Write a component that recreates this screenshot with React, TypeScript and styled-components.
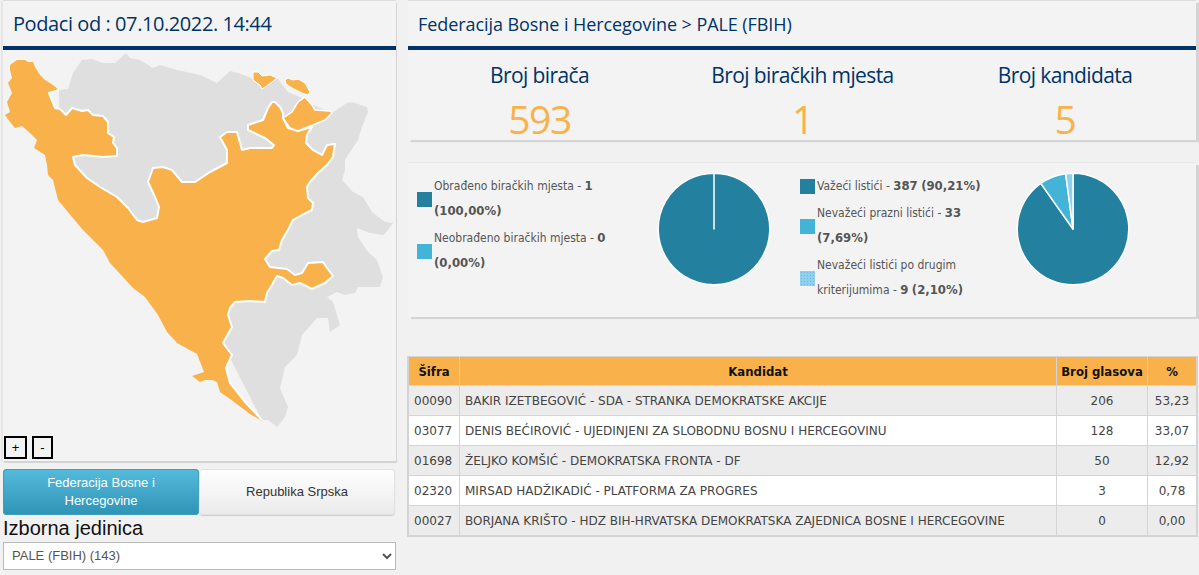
import React from "react";
import styled, { createGlobalStyle } from "styled-components";

const ORANGE = "#f9b24b";
const NAVY = "#003366";
const BLUE = "#23809e";
const SKY = "#43b3d8";
const PALE = "#8fd0ee";

const legendA = [
  { color: "dark", text: ["Obrađeno biračkih mjesta - "], bold: ["1", "(100,00%)"] },
  { color: "sky", text: ["Neobrađeno biračkih mjesta - "], bold: ["0", "(0,00%)"] },
];
const legendB = [
  { color: "dark", text: ["Važeći listići - "], bold: ["387", "(90,21%)"] },
  { color: "sky", text: ["Nevažeći prazni listići - "], bold: ["33", "(7,69%)"] },
  { color: "pale", text: ["Nevažeći listići po drugim ", "kriterijumima - "], bold: ["9", "(2,10%)"] },
];
const rows = [
  ["00090", "BAKIR IZETBEGOVIĆ - SDA - STRANKA DEMOKRATSKE AKCIJE", "206", "53,23"],
  ["03077", "DENIS BEĆIROVIĆ - UJEDINJENI ZA SLOBODNU BOSNU I HERCEGOVINU", "128", "33,07"],
  ["01698", "ŽELJKO KOMŠIĆ - DEMOKRATSKA FRONTA - DF", "50", "12,92"],
  ["02320", "MIRSAD HADŽIKADIĆ - PLATFORMA ZA PROGRES", "3", "0,78"],
  ["00027", "BORJANA KRIŠTO - HDZ BIH-HRVATSKA DEMOKRATSKA ZAJEDNICA BOSNE I HERCEGOVINE", "0", "0,00"],
];

// map traced in page coordinates, the svg sits at (3,50)
const country =
  "59,90 68,89 73,73 82,60 92,59 103,63 115,63 126,53 130,58 140,60 153,68 160,65 170,68 177,70 200,75 217,83 230,71 238,73 252,78 262,89 277,78 288,92 302,98 313,105 332,113 347,103 352,102 367,107 368,112 362,127 358,140 348,155 345,160 345,170 342,180 353,192 363,197 372,212 385,222 393,223 388,230 383,235 370,233 357,228 358,237 368,252 377,260 383,277 380,287 358,287 355,293 345,295 337,292 327,297 333,302 340,325 330,332 328,318 317,318 302,335 297,355 285,367 280,388 288,407 285,417 277,427 268,420 262,420 200,300 60,150";
const border =
  "59,90 49,93 55,108 60,109 66,115 72,108 82,111 88,110 93,115 103,116 108,122 108,133 114,137 113,143 117,148 117,156 103,157 83,155 73,157 75,165 87,178 100,187 117,197 128,208 137,220 143,222 157,218 159,207 155,197 148,182 153,168 163,167 172,170 182,182 195,182 210,172 227,163 227,150 220,137 227,132 237,132 242,150 250,148 272,148 274,145 265,138 248,130 248,125 263,120 268,108 272,102 275,102 280,107 283,113 283,118 288,128 298,131 312,127 307,135 306,143 313,150 322,155 327,145 335,144 333,157 327,165 318,173 310,182 307,187 308,198 313,203 312,210 302,215 293,220 288,230 282,240 279,250 272,251 265,259 270,267 287,269 295,275 302,273 308,263 323,262 327,268 333,276 325,283 312,289 300,283 292,285 283,278 277,276 272,285 267,293 265,302 250,301 235,302 230,308 228,315 232,327 223,343 232,355 226,368 230,383 245,402 262,420";
const coast =
  "262,421 250,414 242,408 230,399 220,392 217,382 212,380 205,380 200,382 192,376 204,372 197,354 177,343 167,332 158,315 145,297 133,288 110,263 103,250 83,230 72,217 58,200 53,180 48,175 47,165 45,155 34,148 37,140 30,133 22,126 15,128 10,122 5,115 10,112 7,102 12,93 8,83 12,78 10,70 10,65 17,60 25,60 28,62 33,62 35,67 40,75 45,80 53,85";
const brcko =
  "305,97 312,105 315,110 330,111 332,113 325,120 313,125 305,128 298,131 290,128 283,118 292,112 298,102";
const posavina = "253,72 258,72 262,76 270,75 277,78 268,85 262,89 260,85 253,80";
const orasje = "285,80 288,78 293,80 298,79 305,83 310,92 308,95 302,93 292,88 286,84";

function slice(cx: number, cy: number, r: number, from: number, to: number) {
  const a = ((from / 100) * 360 - 90) * (Math.PI / 180);
  const b = ((to / 100) * 360 - 90) * (Math.PI / 180);
  const large = to - from > 50 ? 1 : 0;
  return `M${cx} ${cy}L${cx + r * Math.cos(a)} ${cy + r * Math.sin(a)}A${r} ${r} 0 ${large} 1 ${cx + r * Math.cos(b)} ${cy + r * Math.sin(b)}Z`;
}

function Pie({ parts }: { parts: { value: number; fill: string }[] }) {
  let start = 0;
  return (
    <PieSvg viewBox="0 0 114 114">
      {parts.map((p) => {
        const d = slice(57, 57, 55.8, start, start + p.value);
        start += p.value;
        return <path key={p.fill} d={d} fill={p.fill} stroke="#fff" strokeWidth="1.5" strokeLinejoin="round" />;
      })}
    </PieSvg>
  );
}

function Legend({ items, width }: { items: typeof legendB; width: number }) {
  return (
    <LegendList $width={width}>
      {items.map((i) => (
        <LegendItem key={i.text[0]}>
          <Swatch $kind={i.color} />
          <span>
            {i.text.map((t) => (
              <span key={t}>{t}</span>
            ))}
            <LegendBold>{i.bold[0]}</LegendBold> <LegendBold>{i.bold[1]}</LegendBold>
          </span>
        </LegendItem>
      ))}
    </LegendList>
  );
}

export default function App() {
  return (
    <Page>
      <GlobalStyle />
      <LeftColumn>
        <MapPanel>
          <PanelHeader>
            <DateTitle>Podaci od : 07.10.2022. 14:44</DateTitle>
          </PanelHeader>
          <MapSvg viewBox="3 50 393 411">
            <polygon points={country} fill="#dfdfdf" />
            <polygon points={`${border} ${coast}`} fill={ORANGE} />
            <polyline points={border} fill="none" stroke="#fff" strokeWidth="2" strokeLinejoin="round" />
            <polygon points={brcko} fill={ORANGE} stroke="#fff" strokeWidth="1.5" />
            <polygon points={posavina} fill={ORANGE} stroke="#fff" strokeWidth="1" />
            <polygon points={orasje} fill={ORANGE} stroke="#fff" strokeWidth="1" />
          </MapSvg>
          <ZoomBar>
            <ZoomButton>+</ZoomButton>
            <ZoomButton $narrow>-</ZoomButton>
          </ZoomBar>
        </MapPanel>
        <Tabs>
          <Tab $active>Federacija Bosne i Hercegovine</Tab>
          <Tab>Republika Srpska</Tab>
        </Tabs>
        <SelectLabel>Izborna jedinica</SelectLabel>
        <UnitSelect defaultValue="143">
          <option value="143">PALE (FBIH) (143)</option>
        </UnitSelect>
      </LeftColumn>
      <RightColumn>
        <TopPanel>
          <PanelHeader>
            <Breadcrumb>Federacija Bosne i Hercegovine &gt; PALE (FBIH)</Breadcrumb>
          </PanelHeader>
          <Stats>
            <Stat>
              <StatLabel>Broj birača</StatLabel>
              <StatValue>593</StatValue>
            </Stat>
            <Stat>
              <StatLabel>Broj biračkih mjesta</StatLabel>
              <StatValue>1</StatValue>
            </Stat>
            <Stat>
              <StatLabel>Broj kandidata</StatLabel>
              <StatValue>5</StatValue>
            </Stat>
          </Stats>
        </TopPanel>
        <ChartsPanel>
          <ChartBlock>
            <Legend items={legendA} width={232} />
            <Pie parts={[{ value: 99.999, fill: BLUE }]} />
          </ChartBlock>
          <ChartBlock $second>
            <Legend items={legendB} width={208} />
            <Pie
              parts={[
                { value: 90.21, fill: BLUE },
                { value: 7.69, fill: SKY },
                { value: 2.1, fill: PALE },
              ]}
            />
          </ChartBlock>
        </ChartsPanel>
        <ResultsTable>
          <thead>
            <tr>
              <HeadCell $w={51}>Šifra</HeadCell>
              <HeadCell>Kandidat</HeadCell>
              <HeadCell $w={91}>Broj glasova</HeadCell>
              <HeadCell $w={49}>%</HeadCell>
            </tr>
          </thead>
          <tbody>
            {rows.map((r) => (
              <Row key={r[0]}>
                <Cell>{r[0]}</Cell>
                <Cell>{r[1]}</Cell>
                <Cell $center>{r[2]}</Cell>
                <Cell $center>{r[3]}</Cell>
              </Row>
            ))}
          </tbody>
        </ResultsTable>
      </RightColumn>
    </Page>
  );
}

//*Styles

const GlobalStyle = createGlobalStyle`
  html, body {
    margin: 0;
    background: #f1f1f1;
    overflow: hidden;
  }
`;

const Page = styled.div`
  display: grid;
  grid-template-columns: 394px 789px;
  gap: 11px;
  width: 1199px;
  height: 575px;
  padding-left: 3px;
  box-sizing: border-box;
`;

const LeftColumn = styled.div`
  display: flex;
  flex-direction: column;
`;

const RightColumn = styled.div`
  display: flex;
  flex-direction: column;
`;

const MapPanel = styled.div`
  position: relative;
  width: 393px;
  height: 460px;
  margin-top: 1px;
  background: #f3f3f3;
  box-shadow: 0 -1px 0 #ddd, 1px 2px 0 #d4d4d4, -2px 0 0 #e6e6e6;
`;

const PanelHeader = styled.div`
  display: flex;
  align-items: center;
  height: 45px;
  border-bottom: 4px solid ${NAVY};
`;

const DateTitle = styled.h1`
  margin: 0 0 0 10px;
  font: 400 20px "Open Sans", sans-serif;
  letter-spacing: -0.42px;
  color: ${NAVY};
`;

const MapSvg = styled.svg`
  display: block;
  width: 393px;
  height: 411px;
`;

const ZoomBar = styled.div`
  position: absolute;
  left: 1px;
  bottom: 2px;
  display: flex;
  gap: 5px;
`;

const ZoomButton = styled.button<{ $narrow?: boolean }>`
  width: ${(p) => (p.$narrow ? 21 : 23)}px;
  height: 23px;
  padding: 0;
  background: #f3f3f3;
  border: 2px solid #000;
  color: #000;
  font: 13px "Liberation Sans", sans-serif;
`;

const Tabs = styled.div`
  display: flex;
  margin-top: 8px;
  width: 392px;
  height: 46px;
`;

const Tab = styled.div<{ $active?: boolean }>`
  flex: 1;
  display: flex;
  align-items: center;
  justify-content: center;
  text-align: center;
  padding: 0 30px;
  font: 13px/18px "Liberation Sans", sans-serif;
  border-radius: 4px;
  color: ${(p) => (p.$active ? "#fff" : "#333")};
  background: ${(p) =>
    p.$active ? "linear-gradient(#55bbdd, #2f93b5)" : "linear-gradient(#ffffff, #eaeaea)"};
  box-shadow: ${(p) => (p.$active ? "inset 0 0 0 1px #3c9dbd" : "inset 0 0 0 1px #e2e2e2, 0 1px 1px #ccc")};
`;

const SelectLabel = styled.label`
  font: 20px/26px "Liberation Sans", sans-serif;
  color: #111;
`;

const UnitSelect = styled.select`
  width: 393px;
  height: 28px;
  margin-top: 1px;
  padding: 0 4px 2px;
  background: #fff;
  border: 1px solid #bbb;
  border-radius: 0;
  font: 13px "Liberation Sans", sans-serif;
  color: #555;
`;

const TopPanel = styled.div`
  width: 788px;
  height: 139px;
  margin-top: 1px;
  background: #f3f3f3;
  box-shadow: 0 -1px 0 #ddd, 3px 2px 1px #d4d4d4;
`;

const Breadcrumb = styled.h2`
  margin: 0 0 0 10px;
  font: 400 18px "Open Sans", sans-serif;
  letter-spacing: -0.07px;
  color: ${NAVY};
`;

const Stats = styled.div`
  display: grid;
  grid-template-columns: 263px 263px 262px;
`;

const Stat = styled.div`
  display: flex;
  flex-direction: column;
  align-items: center;
  padding-top: 10px;
`;

const StatLabel = styled.div`
  font: 400 21px/30px "Open Sans", sans-serif;
  letter-spacing: -0.6px;
  color: ${NAVY};
`;

const StatValue = styled.div`
  margin-top: 7px;
  font: 400 39px/44px "Open Sans", sans-serif;
  letter-spacing: -1.4px;
  color: ${ORANGE};
`;

const ChartsPanel = styled.div`
  display: flex;
  width: 788px;
  height: 154px;
  margin-top: 23px;
  background: #f3f3f3;
  box-shadow: 0 -1px 0 #e8e8e8, 3px 2px 0 #d4d4d4;
`;

const ChartBlock = styled.div<{ $second?: boolean }>`
  display: flex;
  align-items: flex-start;
  width: ${(p) => (p.$second ? 397 : 391)}px;
  padding: 11px 0 0 ${(p) => (p.$second ? 1 : 9)}px;
  box-sizing: border-box;
`;

const LegendList = styled.div<{ $width: number }>`
  display: flex;
  flex-direction: column;
  gap: 2px;
  width: ${(p) => p.$width}px;
  flex: none;
`;

const LegendItem = styled.div`
  display: flex;
  align-items: center;
  gap: 2px;
  font: 12px/25px "DejaVu Sans Condensed", "DejaVu Sans", sans-serif;
  color: #555;
  padding-right: 20px;
`;

const LegendBold = styled.b`
  font: 700 11.7px/25px "DejaVu Sans", sans-serif;
`;

const Swatch = styled.i<{ $kind: string }>`
  flex: none;
  width: 15px;
  height: 15px;
  background: ${(p) => (p.$kind === "dark" ? BLUE : p.$kind === "sky" ? SKY : PALE)};
  background-image: ${(p) =>
    p.$kind === "pale" ? "radial-gradient(#6db8dc 0.7px, transparent 0.8px)" : "none"};
  background-size: 3px 3px;
`;

const PieSvg = styled.svg`
  flex: none;
  width: 114px;
  height: 114px;
  margin: -2px 0 0 8px;
`;

const ResultsTable = styled.table`
  margin-top: 40px;
  width: 789px;
  border-collapse: collapse;
  table-layout: fixed;
  font: 12px "DejaVu Sans", sans-serif;
  outline: 1px solid #d4d4d4;
`;

const HeadCell = styled.th<{ $w?: number }>`
  ${(p) => (p.$w ? `width: ${p.$w}px;` : "")}
  height: 28px;
  padding: 1px 0 0;
  box-sizing: border-box;
  background: ${ORANGE};
  border: 1px solid #d4d4d4;
  border-top: 0;
  color: #111;
  font: 700 13px "DejaVu Sans Condensed", "DejaVu Sans", sans-serif;
`;

const Row = styled.tr`
  background: #fff;
  &:nth-child(odd) {
    background: #ececec;
  }
`;

const Cell = styled.td<{ $center?: boolean }>`
  height: 30px;
  padding: 1px 5px 0;
  box-sizing: border-box;
  border: 1px solid #d4d4d4;
  color: #444;
  text-align: ${(p) => (p.$center ? "center" : "left")};
`;
